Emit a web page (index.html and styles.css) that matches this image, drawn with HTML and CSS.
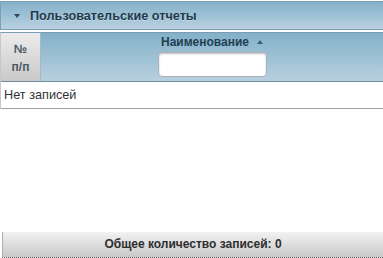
FILE: index.html
```html
<!DOCTYPE html>
<html>
<head>
<meta charset="utf-8">
<link rel="stylesheet" href="styles.css">
</head>
<body>
<div class="page">
  <div class="panel-title">
    <span class="caret"></span>
    <span class="title-text">Пользовательские отчеты</span>
  </div>
  <div class="grid">
    <div class="grid-head">
      <div class="col-num">№<br>п/п</div>
      <div class="col-name">
        <div class="col-label">Наименование<span class="sort"></span></div>
        <input class="filter" type="text">
      </div>
    </div>
    <div class="grid-row">Нет записей</div>
  </div>
  <div class="spacer"></div>
  <div class="footer">Общее количество записей: 0</div>
</div>
</body>
</html>
```

FILE: styles.css
```css
html, body {
  margin: 0;
  padding: 0;
  background: #fff;
}
.page {
  width: 383px;
  height: 258px;
  display: flex;
  flex-direction: column;
  font-family: "Liberation Sans", Arial, sans-serif;
  font-size: 12px;
  overflow: hidden;
}
.panel-title {
  margin-top: 1px;
  height: 27px;
  border: 1px solid #7d9fb3;
  border-right: none;
  background: linear-gradient(#83b1c9, #b9d1e0);
  display: flex;
  align-items: center;
  box-sizing: content-box;
}
.caret {
  width: 0;
  height: 0;
  margin-left: 13px;
  margin-right: 10px;
  border-left: 3px solid transparent;
  border-right: 3px solid transparent;
  border-top: 4px solid #2d4a5c;
}
.title-text {
  font-weight: bold;
  font-size: 12.7px;
  color: #1f3a4d;
  text-shadow: 0 1px 0 rgba(255,255,255,0.35);
}
.grid {
  margin-top: 2px;
  border-top: 1px solid #7a9db2;
  border-left: 1px solid #c8c8c8;
}
.grid-head {
  display: flex;
  height: 48px;
  border-bottom: 1px solid #6f8ea1;
}
.col-num {
  width: 40px;
  border-right: 1px solid #a9b9c2;
  background: linear-gradient(#ececec, #c9c9c9);
  color: #4e5a61;
  font-weight: bold;
  text-align: center;
  line-height: 18px;
  padding-top: 7px;
  box-sizing: border-box;
}
.col-name {
  flex: 1;
  background: linear-gradient(#83b1c9, #b7d0df);
  display: flex;
  flex-direction: column;
  align-items: center;
  padding-top: 2px;
  box-sizing: border-box;
}
.col-label {
  font-weight: bold;
  color: #223f52;
  line-height: 14px;
  display: flex;
  align-items: center;
}
.sort {
  width: 0;
  height: 0;
  margin-left: 8px;
  border-left: 3px solid transparent;
  border-right: 3px solid transparent;
  border-bottom: 4px solid #3c5f74;
}
.filter {
  margin-top: 3px;
  width: 109px;
  height: 25px;
  box-sizing: border-box;
  border: 1px solid #aab3b8;
  border-radius: 4px;
  background: #fff;
  box-shadow: inset 0 1px 2px rgba(0,0,0,0.25);
  padding: 0;
}
.grid-row {
  height: 26px;
  line-height: 26px;
  padding-left: 3px;
  font-size: 12.7px;
  color: #333;
  border-bottom: 1px solid #a0a0a0;
}
.spacer {
  flex: 1;
}
.footer {
  margin-left: 2px;
  height: 25px;
  border-left: 1px solid #b0b0b0;
  border-bottom: 1px dotted #555;
  background: linear-gradient(#f2f2f2, #c8c8c8);
  text-align: center;
  line-height: 25px;
  font-weight: bold;
  color: #2e2e2e;
}
```
